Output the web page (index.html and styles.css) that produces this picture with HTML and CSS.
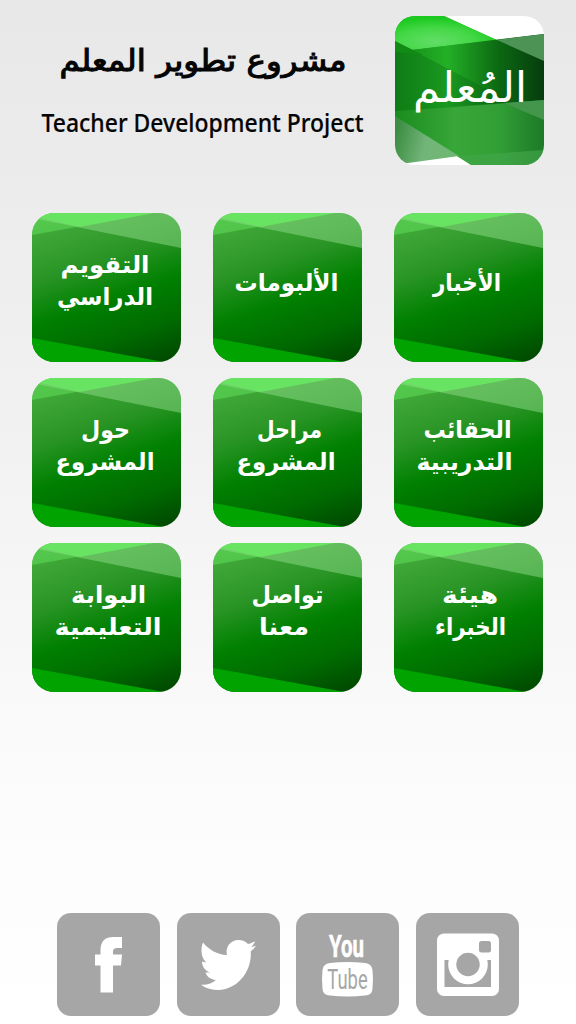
FILE: index.html
```html
<!DOCTYPE html>
<html lang="ar">
<head>
<meta charset="utf-8">
<title>مشروع تطوير المعلم</title>
<link rel="stylesheet" href="styles.css">
</head>
<body>
<svg class="defs" aria-hidden="true">
  <defs>
    <linearGradient id="base" x1="0.32" y1="0" x2="0.68" y2="1.05">
      <stop offset="0" stop-color="#43aa3b"/>
      <stop offset="0.3" stop-color="#2a9526"/>
      <stop offset="0.55" stop-color="#008000"/>
      <stop offset="0.8" stop-color="#006a00"/>
      <stop offset="1" stop-color="#004c00"/>
    </linearGradient>
    <linearGradient id="band" x1="0" y1="0" x2="1" y2="0">
      <stop offset="0" stop-color="#128716"/>
      <stop offset="0.35" stop-color="#23b026"/>
      <stop offset="0.7" stop-color="#0b6812"/>
      <stop offset="1" stop-color="#073c0e"/>
    </linearGradient>
    <linearGradient id="lower" x1="0" y1="0" x2="1" y2="0">
      <stop offset="0" stop-color="#188c1d"/>
      <stop offset="0.4" stop-color="#38a638"/>
      <stop offset="0.7" stop-color="#319f35"/>
      <stop offset="1" stop-color="#1d7928"/>
    </linearGradient>
    <radialGradient id="glow" cx="0.4" cy="0.7" r="0.65">
      <stop offset="0" stop-color="#62dd66"/>
      <stop offset="0.55" stop-color="#45d848"/>
      <stop offset="1" stop-color="#1cc91f"/>
    </radialGradient>
    <linearGradient id="corner" x1="0" y1="0.4" x2="1" y2="0.6">
      <stop offset="0" stop-color="#3b8d42"/>
      <stop offset="0.5" stop-color="#73b579"/>
      <stop offset="1" stop-color="#6eb873"/>
    </linearGradient>
    <g id="face">
      <rect width="149" height="149" fill="url(#base)"/>
      <path d="M0 0H122L0 22Z" fill="#5fdf5a" fill-opacity=".55"/>
      <path d="M0 5L149 35V0H0Z" fill="#8fdb8a" fill-opacity=".5"/>
      <path d="M0 3L48 14L122 0H0Z" fill="#66e960" fill-opacity=".8"/>
      <path d="M0 125L132 149H0Z" fill="#00a300"/>
    </g>
  </defs>
</svg>
<main class="screen">
  <header class="header">
    <svg class="titles" viewBox="0 0 330 110">
      <text class="title-ar" x="161" y="41" textLength="287" lengthAdjust="spacingAndGlyphs">مشروع تطوير المعلم</text>
      <text class="title-en" x="160.500" y="101.500" textLength="322" lengthAdjust="spacingAndGlyphs">Teacher Development Project</text>
    </svg>
    <svg class="logo" viewBox="0 0 149 149">
      <rect width="149" height="149" fill="#fff"/>
      <path d="M0 0H49L149 46V149H76L0 101Z" fill="url(#lower)"/>
      <path d="M0 0H49L102 24L0 36Z" fill="url(#glow)"/>
      <path d="M0 36L149 18V84L0 95Z" fill="url(#band)"/>
      <path d="M0 25L149 103V85L0 95Z" fill="#045c12" fill-opacity=".28"/>
      <path d="M0 25L28 39L0 36Z" fill="#128b16"/>
      <path d="M102 24L149 18V45Z" fill="#4d9356"/>
      <path d="M109 87L149 84V104Z" fill="#43964b"/>
      <path d="M0 100L64 140L13 147L0 149Z" fill="url(#corner)"/>
      <path d="M64 140L149 134V149H76Z" fill="#43a64b" fill-opacity=".65"/>
      <text class="logo-text" transform="translate(75 85.500) scale(1 1.250)" x="0" y="0" textLength="114" lengthAdjust="spacingAndGlyphs">المُعلم</text>
    </svg>
  </header>
  <nav class="grid">
    <svg class="tile" viewBox="0 0 149 149"><use href="#face"/><text class="label" x="73" y="59.500" textLength="89" lengthAdjust="spacingAndGlyphs">التقويم</text><text class="label" x="73" y="91.500" textLength="96" lengthAdjust="spacingAndGlyphs">الدراسي</text></svg>
    <svg class="tile" viewBox="0 0 149 149"><use href="#face"/><text class="label" x="73.500" y="78" textLength="104" lengthAdjust="spacingAndGlyphs">الألبومات</text></svg>
    <svg class="tile" viewBox="0 0 149 149"><use href="#face"/><text class="label" x="73" y="78" textLength="68" lengthAdjust="spacingAndGlyphs">الأخبار</text></svg>
    <svg class="tile" viewBox="0 0 149 149"><use href="#face"/><text class="label" x="73.500" y="59.500" textLength="49" lengthAdjust="spacingAndGlyphs">حول</text><text class="label" x="73" y="91.500" textLength="99" lengthAdjust="spacingAndGlyphs">المشروع</text></svg>
    <svg class="tile" viewBox="0 0 149 149"><use href="#face"/><text class="label" x="76.500" y="59.500" textLength="65" lengthAdjust="spacingAndGlyphs">مراحل</text><text class="label" x="73" y="91.500" textLength="99" lengthAdjust="spacingAndGlyphs">المشروع</text></svg>
    <svg class="tile" viewBox="0 0 149 149"><use href="#face"/><text class="label" x="73.500" y="59.500" textLength="88" lengthAdjust="spacingAndGlyphs">الحقائب</text><text class="label" x="70.500" y="91.500" textLength="96" lengthAdjust="spacingAndGlyphs">التدريبية</text></svg>
    <svg class="tile" viewBox="0 0 149 149"><use href="#face"/><text class="label" x="76.500" y="59.500" textLength="75" lengthAdjust="spacingAndGlyphs">البوابة</text><text class="label" x="76" y="91.500" textLength="107" lengthAdjust="spacingAndGlyphs">التعليمية</text></svg>
    <svg class="tile" viewBox="0 0 149 149"><use href="#face"/><text class="label" x="74.500" y="59.500" textLength="72" lengthAdjust="spacingAndGlyphs">تواصل</text><text class="label" x="71" y="91.500" textLength="50" lengthAdjust="spacingAndGlyphs">معنا</text></svg>
    <svg class="tile" viewBox="0 0 149 149"><use href="#face"/><text class="label" x="76" y="59.500" textLength="56" lengthAdjust="spacingAndGlyphs">هيئة</text><text class="label" x="76.500" y="91.500" textLength="71" lengthAdjust="spacingAndGlyphs">الخبراء</text></svg>
  </nav>
  <footer class="social">
    <svg class="social-icon" viewBox="0 0 103 103"><path fill="#fff" d="M43.500 79.500V52.500H38V41.500H43.500V37.500C43.500 28 48 24 56.500 24H65V35H60Q56 35 56 38.500V41.500H65L64 52.500H56V79.500Z"/></svg>
    <svg class="social-icon" viewBox="0 0 103 103"><path fill="#fff" d="M26 29.500C32 37 40.500 41.500 50 42C48 34 53.500 27 61.500 27C65.500 27 68.500 28.500 71 31C74 30.500 76 29.500 78 28.300C77.500 30.500 76 32.500 74 34C75.500 34 77 33.500 79 32.800C77.500 35 76 36.500 73.800 38.300C75 61 58 77 41.500 77C35 77 29 75.500 24 71.700C30 72.200 35 70.500 39 67C33 66.500 29.500 63 28.500 59.500H33C28 57.500 25 53.500 25 48.500L29.500 49.500C24.500 45.500 23 37 26 29.500Z"/></svg>
    <svg class="social-icon" viewBox="0 0 103 103"><text class="you" transform="translate(50.500 43.500) scale(.66 1)" x="0" y="0" textLength="53" lengthAdjust="spacingAndGlyphs">You</text><path fill="#fff" d="M34 50Q51 48 69 50Q76 51 76.500 57Q77.500 66 76.500 76Q76 82 69 82.500Q51 84.500 34 82.500Q27 82 26.500 76Q25.500 66 26.500 57Q27 51 34 50Z"/><text class="tube" transform="translate(51.500 75.500) scale(.62 1)" x="0" y="0" textLength="65" lengthAdjust="spacingAndGlyphs">Tube</text></svg>
    <svg class="social-icon" viewBox="0 0 103 103"><rect x="21" y="20.500" width="62" height="62.500" rx="7" fill="#fff"/><path fill="#a6a6a6" d="M28.500 47H75V74H28.500Z"/><circle cx="52" cy="51.500" r="19.800" fill="#fff"/><circle cx="52" cy="51.500" r="11.700" fill="#a6a6a6"/><rect x="63" y="28" width="12" height="11.500" rx="2.500" fill="#a6a6a6"/></svg>
  </footer>
</main>
</body>
</html>
```
FILE: styles.css
```css
* { box-sizing: border-box; }
body { margin: 0; }
.defs { position: absolute; width: 0; height: 0; }
.screen {
  display: flex;
  flex-direction: column;
  width: 576px;
  height: 1024px;
  padding: 16px 32px 8px 32px;
  background: linear-gradient(#e8e8e8 0, #ebebeb 15%, #f3f3f3 48%, #fbfbfb 75%, #fff 100%);
}
.header {
  display: flex;
  justify-content: space-between;
  height: 149px;
  padding-left: 10px;
}
.titles { width: 330px; height: 110px; margin-top: 14px; overflow: visible; }
.logo { width: 149px; height: 149px; border-radius: 20px; }
.title-ar, .title-en { text-anchor: middle; fill: #050505; }
.title-ar { font: 30px "DejaVu Sans", sans-serif; direction: rtl; stroke: #050505; stroke-width: 1.1px; }
.title-en { font: 500 25px "Noto Sans", "Open Sans", sans-serif; stroke: #050505; stroke-width: .2px; }
.logo-text { font: 34px "DejaVu Sans", sans-serif; direction: rtl; text-anchor: middle; fill: #fff; }
.grid {
  display: grid;
  grid-template-columns: repeat(3, 149px);
  column-gap: 32px;
  row-gap: 16px;
  margin-top: 48px;
}
.tile { display: block; width: 149px; height: 149px; border-radius: 22px; }
.label { font: bold 24px "DejaVu Sans", sans-serif; direction: rtl; text-anchor: middle; fill: #fff; }
.social {
  display: flex;
  gap: 16.5px;
  margin-top: auto;
  padding-left: 25px;
}
.social-icon { width: 103px; height: 103px; border-radius: 14px; background: #a6a6a6; }
.you { font: bold 31px "Roboto", "Liberation Sans", sans-serif; text-anchor: middle; fill: #fff; stroke: #fff; stroke-width: .6px; }
.tube { font: 27px "Roboto", "Liberation Sans", sans-serif; text-anchor: middle; fill: #a6a6a6; }
```
